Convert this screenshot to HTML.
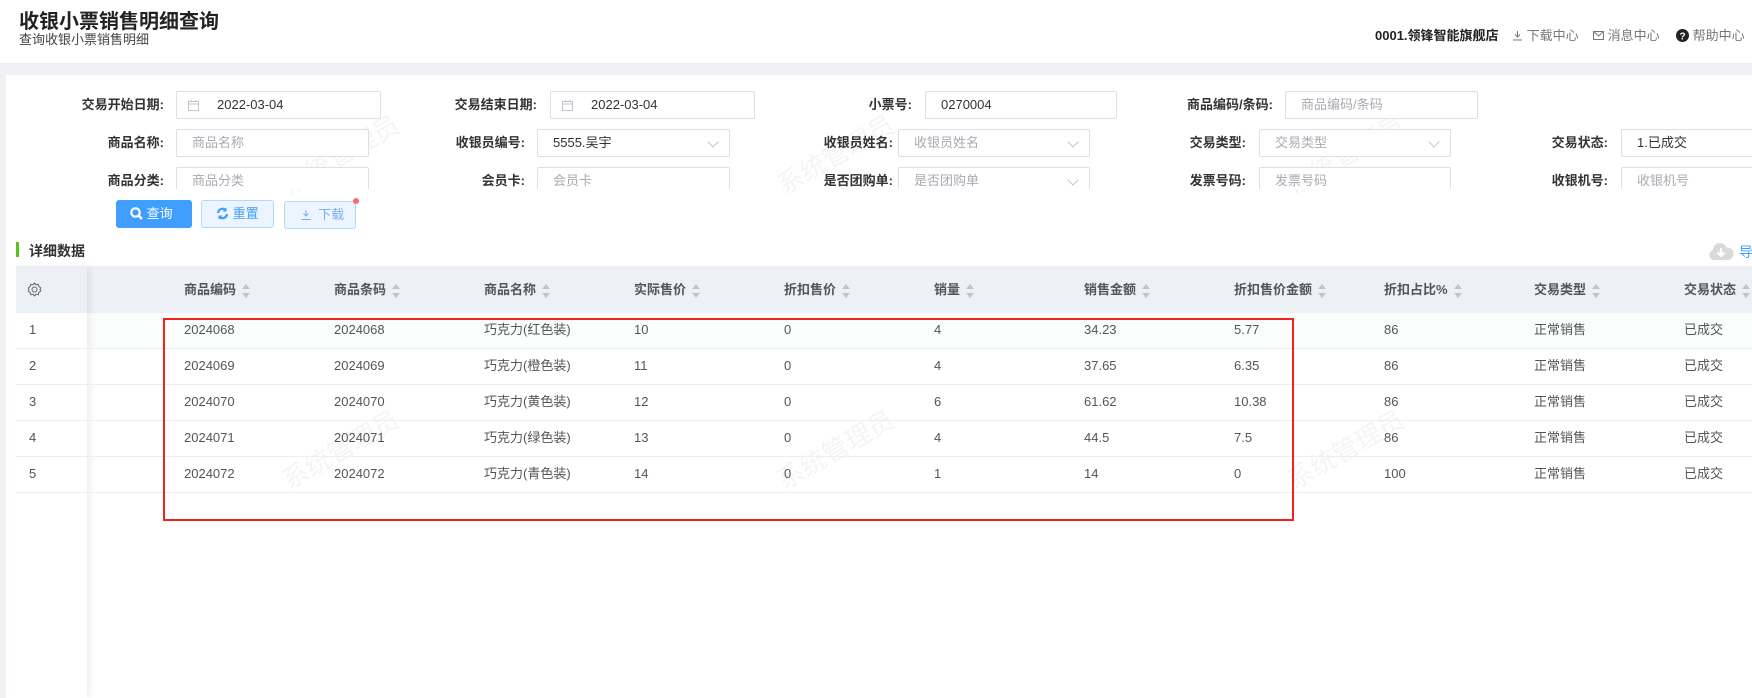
<!DOCTYPE html>
<html><head><meta charset="utf-8"><style>
*{margin:0;padding:0;box-sizing:border-box}
body{width:1752px;height:698px;overflow:hidden;background:#fff;font-family:"Liberation Sans","Noto Sans CJK SC",sans-serif;position:relative;color:#333}
.a{position:absolute;white-space:nowrap}
.band{position:absolute;left:0;top:63px;width:1752px;height:635px;background:#f0f1f4}
.card{position:absolute;left:6px;top:75px;width:1746px;height:623px;background:#fff}
.lbl{position:absolute;font-size:13px;font-weight:bold;color:#333;text-align:right;width:120px;line-height:28px}
.inp{position:absolute;height:28px;border:1px solid #dcdfe6;border-radius:2px;font-size:13px;line-height:26px;padding-left:15px;color:#333;background:#fff}
.ph{color:#a8abb2}
.chev{position:absolute;right:12px;top:8px;width:8px;height:8px;border-right:1px solid #c0c4cc;border-bottom:1px solid #c0c4cc;transform:rotate(45deg)}
.th{position:absolute;font-size:13px;font-weight:bold;color:#555;line-height:47px;top:266px}
.sort{display:inline-block;vertical-align:middle;margin-left:6px;width:8px;height:14px;position:relative}
.sort:before{content:"";position:absolute;left:0;top:0;border-left:4px solid transparent;border-right:4px solid transparent;border-bottom:5px solid #c0c4cc}
.sort:after{content:"";position:absolute;left:0;bottom:0;border-left:4px solid transparent;border-right:4px solid transparent;border-top:5px solid #c0c4cc}
.td{position:absolute;font-size:13px;color:#555;line-height:36px}
.rl{position:absolute;left:16px;width:1736px;height:1px;background:#ebeef5}
.wm{position:absolute;font-size:26px;color:rgba(0,0,0,0.045);transform:rotate(-30deg);white-space:nowrap}
</style></head><body>
<div class="a" style="left:19px;top:5px;font-size:20px;font-weight:bold;color:#222">收银小票销售明细查询</div>
<div class="a" style="left:19px;top:29px;font-size:13px;color:#444">查询收银小票销售明细</div>
<div class="a" style="left:1375px;top:25px;font-size:13px;font-weight:bold;color:#222">0001.领锋智能旗舰店</div>
<div class="a" style="left:1512px;top:25px;font-size:13px;color:#777">
<svg width="11" height="11" viewBox="0 0 11 11" style="vertical-align:-1px"><path d="M5.5 1v6M3 4.5l2.5 2.5L8 4.5M1 10h9" stroke="#777" fill="none"/></svg> 下载中心</div>
<div class="a" style="left:1593px;top:25px;font-size:13px;color:#777">
<svg width="11" height="11" viewBox="0 0 11 11" style="vertical-align:-1px"><rect x="0.5" y="1.5" width="10" height="8" stroke="#777" fill="none"/><path d="M1 2l4.5 4 4.5-4" stroke="#777" fill="none"/></svg> 消息中心</div>
<div class="a" style="left:1676px;top:25px;font-size:13px;color:#777">
<svg width="13" height="13" viewBox="0 0 13 13" style="vertical-align:-2px"><circle cx="6.5" cy="6.5" r="6.5" fill="#222"/><text x="6.5" y="10.5" font-size="10" font-weight="bold" fill="#fff" text-anchor="middle" font-family="Liberation Sans">?</text></svg> 帮助中心</div>

<div class="band"></div>
<div class="card"></div>
<div class="wm" style="left:275px;top:135px">系统管理员</div>
<div class="wm" style="left:770px;top:135px">系统管理员</div>
<div class="wm" style="left:1280px;top:135px">系统管理员</div>
<div class="wm" style="left:275px;top:430px">系统管理员</div>
<div class="wm" style="left:770px;top:430px">系统管理员</div>
<div class="wm" style="left:1280px;top:430px">系统管理员</div>

<div class="lbl" style="left:44px;top:91px">交易开始日期:</div>
<div class="inp" style="left:176px;top:91px;width:205px;padding-left:40px">
<svg class="a" style="left:11px;top:8px" width="11" height="11" viewBox="0 0 11 11"><rect x="0.5" y="1.5" width="10" height="9" stroke="#c0c4cc" fill="none"/><path d="M1 4h9M3 0v2M8 0v2" stroke="#c0c4cc"/></svg>2022-03-04</div>
<div class="lbl" style="left:417px;top:91px">交易结束日期:</div>
<div class="inp" style="left:550px;top:91px;width:205px;padding-left:40px">
<svg class="a" style="left:11px;top:8px" width="11" height="11" viewBox="0 0 11 11"><rect x="0.5" y="1.5" width="10" height="9" stroke="#c0c4cc" fill="none"/><path d="M1 4h9M3 0v2M8 0v2" stroke="#c0c4cc"/></svg>2022-03-04</div>
<div class="lbl" style="left:792px;top:91px">小票号:</div>
<div class="inp" style="left:925px;top:91px;width:192px">0270004</div>
<div class="lbl" style="left:1153px;top:91px">商品编码/条码:</div>
<div class="inp ph" style="left:1285px;top:91px;width:193px">商品编码/条码</div>
<div class="lbl" style="left:44px;top:129px">商品名称:</div>
<div class="inp ph" style="left:176px;top:129px;width:193px">商品名称</div>
<div class="lbl" style="left:405px;top:129px">收银员编号:</div>
<div class="inp" style="left:537px;top:129px;width:193px">5555.吴宇<span class="chev"></span></div>
<div class="lbl" style="left:773px;top:129px">收银员姓名:</div>
<div class="inp ph" style="left:898px;top:129px;width:192px">收银员姓名<span class="chev"></span></div>
<div class="lbl" style="left:1126px;top:129px">交易类型:</div>
<div class="inp ph" style="left:1259px;top:129px;width:192px">交易类型<span class="chev"></span></div>
<div class="lbl" style="left:1488px;top:129px">交易状态:</div>
<div class="inp" style="left:1621px;top:129px;width:200px">1.已成交</div>
<div style="position:absolute;left:0;top:160px;width:1752px;height:29px;overflow:hidden">
<div class="lbl" style="left:44px;top:7px">商品分类:</div>
<div class="inp ph" style="left:176px;top:7px;width:193px">商品分类</div>
<div class="lbl" style="left:405px;top:7px">会员卡:</div>
<div class="inp ph" style="left:537px;top:7px;width:193px">会员卡</div>
<div class="lbl" style="left:773px;top:7px">是否团购单:</div>
<div class="inp ph" style="left:898px;top:7px;width:192px">是否团购单<span class="chev"></span></div>
<div class="lbl" style="left:1126px;top:7px">发票号码:</div>
<div class="inp ph" style="left:1259px;top:7px;width:192px">发票号码</div>
<div class="lbl" style="left:1488px;top:7px">收银机号:</div>
<div class="inp ph" style="left:1621px;top:7px;width:200px">收银机号</div>
</div>
<div class="a" style="left:116px;top:200px;width:76px;height:28px;background:#409eff;border-radius:3px;color:#fff;font-size:13px;line-height:28px;padding-left:14px">
<svg width="13" height="13" viewBox="0 0 13 13" style="vertical-align:-2px"><circle cx="5.5" cy="5.5" r="4.2" stroke="#fff" stroke-width="2.2" fill="none"/><path d="M8.5 8.5l3.5 3.5" stroke="#fff" stroke-width="2.4"/></svg> 查询</div>
<div class="a" style="left:201px;top:200px;width:73px;height:28px;background:#ecf5ff;border:1px solid #b3d8ff;border-radius:3px;color:#409eff;font-size:13px;line-height:26px;padding-left:14px">
<svg width="13" height="13" viewBox="0 0 13 13" style="vertical-align:-2px"><path d="M2 6a4.5 4.5 0 0 1 8-2.5M11 7a4.5 4.5 0 0 1-8 2.5" stroke="#409eff" stroke-width="2.2" fill="none"/><path d="M10.5 0.5v4h-4zM2.5 12.5v-4h4z" fill="#409eff"/></svg> 重置</div>
<div class="a" style="left:284px;top:201px;width:72px;height:28px;background:#ecf5ff;border:1px solid #b3d8ff;border-radius:3px;color:#79b0f0;font-size:13px;line-height:26px;padding-left:16px">
<svg width="10" height="10" viewBox="0 0 10 10" style="vertical-align:-1px"><path d="M5 0v6M2.5 3.5L5 6l2.5-2.5M0.5 9.5h9" stroke="#79b0f0" fill="none"/></svg>&nbsp; 下载</div>
<div class="a" style="left:353px;top:198px;width:6px;height:6px;border-radius:50%;background:#f56c6c"></div>

<div class="a" style="left:16px;top:242px;width:3px;height:15px;background:#52c41a"></div>
<div class="a" style="left:29px;top:241px;font-size:14px;font-weight:bold;color:#333">详细数据</div>
<svg class="a" style="left:1708px;top:241px" width="26" height="20" viewBox="0 0 26 20"><path d="M6 19a5 5 0 0 1-1-9.8A7 7 0 0 1 18.5 6.5 5.5 5.5 0 0 1 20 19z" fill="#d9d9d9"/><path d="M13 7v8M9.5 11.5L13 15l3.5-3.5" stroke="#fff" stroke-width="2.2" fill="none"/></svg>
<div class="a" style="left:1739px;top:242px;font-size:14px;color:#409eff">导</div>

<div class="a" style="left:16px;top:266px;width:1736px;height:47px;background:#edf0f5"></div>
<div class="a" style="left:16px;top:313px;width:1736px;height:36px;background:#fbfdfd"></div>
<div class="a" style="left:16px;top:266px;width:71px;height:432px;background:#fff;box-shadow:3px 0 6px rgba(0,0,0,0.07)"></div>
<div class="a" style="left:16px;top:266px;width:71px;height:47px;background:#edf0f5"></div>
<svg class="a" style="left:27px;top:282px" width="15" height="15" viewBox="0 0 15 15"><circle cx="7.5" cy="7.5" r="2.5" stroke="#666" fill="none"/><path d="M7.5 1l1.5 1.8 2.2-.6.6 2.2L13.8 6l-.8 1.5.8 1.5-2 1.6-.6 2.2-2.2-.6L7.5 14 6 12.2l-2.2.6-.6-2.2L1.2 9 2 7.5 1.2 6l2-1.6.6-2.2 2.2.6z" stroke="#666" fill="none"/></svg>

<div class="th" style="left:184px">商品编码<span class="sort"></span></div>
<div class="th" style="left:334px">商品条码<span class="sort"></span></div>
<div class="th" style="left:484px">商品名称<span class="sort"></span></div>
<div class="th" style="left:634px">实际售价<span class="sort"></span></div>
<div class="th" style="left:784px">折扣售价<span class="sort"></span></div>
<div class="th" style="left:934px">销量<span class="sort"></span></div>
<div class="th" style="left:1084px">销售金额<span class="sort"></span></div>
<div class="th" style="left:1234px">折扣售价金额<span class="sort"></span></div>
<div class="th" style="left:1384px">折扣占比%<span class="sort"></span></div>
<div class="th" style="left:1534px">交易类型<span class="sort"></span></div>
<div class="th" style="left:1684px">交易状态<span class="sort"></span></div>

<div class="rl" style="top:348px"></div><div class="rl" style="top:384px"></div><div class="rl" style="top:420px"></div><div class="rl" style="top:456px"></div><div class="rl" style="top:492px"></div>

<div style="position:absolute;left:0;top:312px;width:1752px">
<div style="position:relative;height:36px">
<div class="td" style="left:29px">1</div><div class="td" style="left:184px">2024068</div><div class="td" style="left:334px">2024068</div><div class="td" style="left:484px">巧克力(红色装)</div><div class="td" style="left:634px">10</div><div class="td" style="left:784px">0</div><div class="td" style="left:934px">4</div><div class="td" style="left:1084px">34.23</div><div class="td" style="left:1234px">5.77</div><div class="td" style="left:1384px">86</div><div class="td" style="left:1534px">正常销售</div><div class="td" style="left:1684px">已成交</div></div>
<div style="position:relative;height:36px">
<div class="td" style="left:29px">2</div><div class="td" style="left:184px">2024069</div><div class="td" style="left:334px">2024069</div><div class="td" style="left:484px">巧克力(橙色装)</div><div class="td" style="left:634px">11</div><div class="td" style="left:784px">0</div><div class="td" style="left:934px">4</div><div class="td" style="left:1084px">37.65</div><div class="td" style="left:1234px">6.35</div><div class="td" style="left:1384px">86</div><div class="td" style="left:1534px">正常销售</div><div class="td" style="left:1684px">已成交</div></div>
<div style="position:relative;height:36px">
<div class="td" style="left:29px">3</div><div class="td" style="left:184px">2024070</div><div class="td" style="left:334px">2024070</div><div class="td" style="left:484px">巧克力(黄色装)</div><div class="td" style="left:634px">12</div><div class="td" style="left:784px">0</div><div class="td" style="left:934px">6</div><div class="td" style="left:1084px">61.62</div><div class="td" style="left:1234px">10.38</div><div class="td" style="left:1384px">86</div><div class="td" style="left:1534px">正常销售</div><div class="td" style="left:1684px">已成交</div></div>
<div style="position:relative;height:36px">
<div class="td" style="left:29px">4</div><div class="td" style="left:184px">2024071</div><div class="td" style="left:334px">2024071</div><div class="td" style="left:484px">巧克力(绿色装)</div><div class="td" style="left:634px">13</div><div class="td" style="left:784px">0</div><div class="td" style="left:934px">4</div><div class="td" style="left:1084px">44.5</div><div class="td" style="left:1234px">7.5</div><div class="td" style="left:1384px">86</div><div class="td" style="left:1534px">正常销售</div><div class="td" style="left:1684px">已成交</div></div>
<div style="position:relative;height:36px">
<div class="td" style="left:29px">5</div><div class="td" style="left:184px">2024072</div><div class="td" style="left:334px">2024072</div><div class="td" style="left:484px">巧克力(青色装)</div><div class="td" style="left:634px">14</div><div class="td" style="left:784px">0</div><div class="td" style="left:934px">1</div><div class="td" style="left:1084px">14</div><div class="td" style="left:1234px">0</div><div class="td" style="left:1384px">100</div><div class="td" style="left:1534px">正常销售</div><div class="td" style="left:1684px">已成交</div></div>
</div>

<div class="a" style="left:163px;top:318px;width:1131px;height:203px;border:2px solid #f5221b"></div>
</body></html>
